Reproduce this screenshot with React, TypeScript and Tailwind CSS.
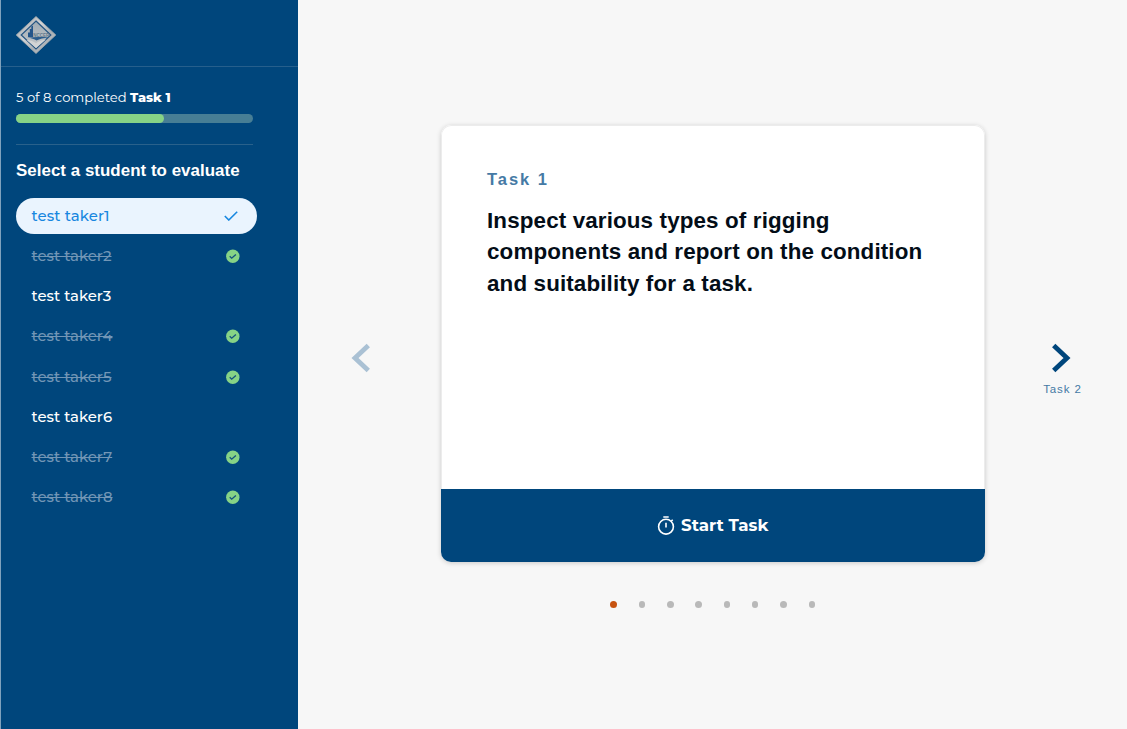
const students = [
  { name: 'test taker1', state: 'selected' },
  { name: 'test taker2', state: 'done' },
  { name: 'test taker3', state: 'open' },
  { name: 'test taker4', state: 'done' },
  { name: 'test taker5', state: 'done' },
  { name: 'test taker6', state: 'open' },
  { name: 'test taker7', state: 'done' },
  { name: 'test taker8', state: 'done' },
];

function Logo() {
  return (
    <svg width="42" height="38" viewBox="0 0 42 38" className="block">
      <defs>
        <linearGradient id="silver" x1="0" y1="0" x2="1" y2="1">
          <stop offset="0" stopColor="#8f979d" />
          <stop offset="0.4" stopColor="#d3d5d7" />
          <stop offset="0.65" stopColor="#a9afb4" />
          <stop offset="1" stopColor="#c3c7ca" />
        </linearGradient>
        <linearGradient id="plate" x1="0" y1="0" x2="0" y2="1">
          <stop offset="0" stopColor="#9fabb4" />
          <stop offset="0.5" stopColor="#b3babf" />
          <stop offset="1" stopColor="#c5c8ca" />
        </linearGradient>
      </defs>
      <path d="M21 .5 40.800 19 21 37.500 1.200 19Z" fill="url(#silver)" stroke="#a3a9ad" strokeWidth="0.800" strokeLinejoin="round" />
      <path d="M21 5 35.800 19 21 33 6.200 19Z" fill="url(#plate)" stroke="#245583" strokeWidth="1.200" />
      <path d="M13 21v-4.500h1.800V13h1.500v-2.500l1.700-1V21Z" fill="#23558a" />
      <path d="M12 21.800c7-1 14-.8 22.500-.4-6 .3-10 1.500-13 3.200-2-1.500-5-2.600-9.500-2.800Z" fill="#2b5d8d" />
      <path d="M11.500 24c4 .2 7 1.300 9.500 3.300 3-2 6-3.200 10-3.700L21 32Z" fill="#d2d4d5" />
      <text x="18.300" y="20.600" fontSize="4.800" fontWeight="700" textLength="16" lengthAdjust="spacingAndGlyphs" fill="#60798c" className="font-['Liberation_Sans',sans-serif]">NCCER</text>
    </svg>
  );
}

function DoneIcon() {
  return (
    <svg width="14" height="14" viewBox="0 0 14 14">
      <circle cx="6.800" cy="7.200" r="6.700" fill="#86d386" />
      <path d="m3.700 7.300 2 1.900 4.200-3.800" fill="none" stroke="#14527f" strokeWidth="1.300" />
    </svg>
  );
}

function StudentRow({ name, state }: { name: string; state: string }) {
  const tone =
    state === 'selected'
      ? 'bg-[#eaf4fe] text-[#1787e0] tracking-[0.120px]'
      : state === 'done'
        ? 'text-[#7296b6] line-through'
        : 'text-white';
  return (
    <li className={`flex h-[36.700px] w-[241px] items-center justify-between rounded-full pl-[15.500px] text-[14.900px] font-medium ${tone}`}>
      <span className="pt-[0.500px]">{name}</span>
      {state === 'done' && <span className="mr-[17.500px]"><DoneIcon /></span>}
      {state === 'selected' && (
        <svg width="14" height="10" viewBox="0 0 14 10" className="mr-[19px]">
          <path d="m.8 5 4 4L13.200.8" fill="none" stroke="#1787e0" strokeWidth="1.600" />
        </svg>
      )}
    </li>
  );
}

export default function App() {
  return (
    <div className="flex h-[729px] w-[1127px] overflow-hidden bg-[#f7f7f7] font-['Montserrat','Inter',sans-serif]">
      <aside className="flex w-[298px] shrink-0 flex-col border-l border-l-[#7fa2bd] bg-[#00467c]">
        <header className="h-[67px] border-b border-[#265f8c] pt-4 pl-[14px]">
          <Logo />
        </header>
        <div className="flex flex-col pl-[15px]">
          <p className="mt-[20px] h-5 text-[13.150px] leading-5 whitespace-nowrap text-white">
            5 of 8 completed <b className="text-[12.900px] font-extrabold">Task 1</b>
          </p>
          <div className="mt-[7px] h-[9px] w-[236.500px] rounded-full bg-[#477e95]">
            <div className="h-full w-[62.500%] rounded-full bg-[#86d386]" />
          </div>
          <div className="mt-[21px] h-px w-[236.500px] bg-[#29618b]" />
          <h1 className="mt-[14px] h-6 font-['Liberation_Sans',sans-serif] text-[16.900px] leading-6 font-bold tracking-[0.040px] whitespace-nowrap text-white">
            Select a student to evaluate
          </h1>
          <ul className="mt-[14.500px] flex flex-col gap-[3.500px]">
            {students.map((s) => (
              <StudentRow key={s.name} {...s} />
            ))}
          </ul>
        </div>
      </aside>

      <main className="flex flex-1 pt-[125px]">
        <div className="mt-[218px] h-[30px] w-[143px] shrink-0 pl-[51.500px]">
          <svg width="22" height="30" viewBox="0 0 22 30">
            <path d="M18.300 2.500 5 15l13.300 12.500" fill="none" stroke="#aac1d4" strokeWidth="4.800" />
          </svg>
        </div>

        <div className="flex w-[543.500px] shrink-0 flex-col">
          <section className="flex h-[437px] flex-col overflow-hidden rounded-[10px] bg-white shadow-[0_1px_5px_rgba(0,0,0,0.19)]">
            <div className="flex-1 rounded-t-[10px] border-x border-t border-[#ececec] px-[45px] pt-[41px] font-['Liberation_Sans',sans-serif] font-bold">
              <p className="h-6 text-[16.500px] leading-6 tracking-[1.950px] text-[#457aa5]">Task 1</p>
              <h2 className="mt-[14px] text-[22.400px] leading-[31.400px] tracking-[0.130px] whitespace-nowrap text-[#030d17]">
                Inspect various types of rigging<br />
                components and report on the condition<br />
                and suitability for a task.
              </h2>
            </div>
            <button className="flex h-[73px] items-center justify-center gap-[6px] bg-[#00467c] text-[16.700px] font-bold text-white">
              <svg width="18" height="19" viewBox="0 0 18 19" fill="none" stroke="white" strokeWidth="1.600">
                <circle cx="9" cy="10.700" r="7.400" />
                <path d="M6.300 1h5.400M9 6.700v4.800M14.200 5.300l1.500-1.500" />
              </svg>
              <span>Start Task</span>
            </button>
          </section>
          <nav className="mt-[39px] flex justify-center gap-[21.800px]">
            <span className="size-[6.500px] rounded-full bg-[#c75310]" />
            {[2, 3, 4, 5, 6, 7, 8].map((n) => (
              <span key={n} className="size-[6.500px] rounded-full bg-[#b9b9b9]" />
            ))}
          </nav>
        </div>

        <div className="mt-[218px] ml-[53px] flex w-[50px] flex-col items-center">
          <svg width="22" height="30" viewBox="0 0 22 30" className="mr-[4px]">
            <path d="m3.700 2.500 13.300 12.500L3.700 27.500" fill="none" stroke="#00467c" strokeWidth="4.800" />
          </svg>
          <span className="mt-[8px] font-['Liberation_Sans',sans-serif] text-[11.500px] leading-4 tracking-[0.900px] whitespace-nowrap text-[#457aa5]">Task 2</span>
        </div>
      </main>
    </div>
  );
}
